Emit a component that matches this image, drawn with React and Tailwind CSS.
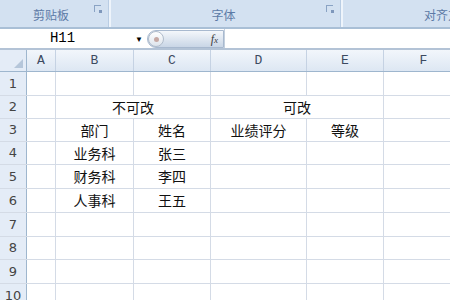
import React from "react";

const cols = [
  { key: "A", w: "w-[29px]" },
  { key: "B", w: "w-[78px]" },
  { key: "C", w: "w-[77px]" },
  { key: "D", w: "w-[96px]" },
  { key: "E", w: "w-[77px]" },
  { key: "F", w: "w-[80px]" },
];

const rowH = ["h-[24px]", "h-[23px]", "h-[23px]", "h-[23px]", "h-[24px]", "h-[24px]", "h-[24px]", "h-[23px]", "h-[24px]", "h-[24px]"];

// cell contents by row number; merged cells use span widths
const rows = {
  2: [
    { w: "w-[29px]" },
    { w: "w-[155px]", text: "不可改" },
    { w: "w-[173px]", text: "可改" },
    { w: "w-[80px]" },
  ],
  3: [null, "部门", "姓名", "业绩评分", "等级", null],
  4: [null, "业务科", "张三", null, null, null],
  5: [null, "财务科", "李四", null, null, null],
  6: [null, "人事科", "王五", null, null, null],
};

const cjk = { fontFamily: '"Noto Sans CJK SC", "Noto Sans", sans-serif' };
const mono = { fontFamily: '"Liberation Mono", "DejaVu Sans Mono", monospace' };

function Launcher() {
  return (
    <span className="inline-block w-[7px] h-[7px] border-l border-t border-[#8aa3c4] relative">
      <span className="absolute right-[-1px] bottom-[-1px] w-[3px] h-[3px] bg-[#7e97bb]" />
    </span>
  );
}

function Ribbon() {
  return (
    <div className="h-[29px] flex bg-[#dbe6f4] border-b-2 border-[#a9bfd6]">
      <div className="w-[108px] flex items-end pb-[3px] bg-[#d3e1f1]">
        <span className="flex-1 text-center text-[12px] text-[#5c7aa6] pl-[8px]" style={cjk}>剪贴板</span>
        <span className="pr-[7px] pb-[6px]"><Launcher /></span>
      </div>
      <div className="w-[3px] shrink-0 bg-[#eef4fb] border-l border-[#b9cde4]" />
      <div className="w-[229px] flex items-end pb-[3px] bg-[#d3e1f1]">
        <span className="flex-1 text-center text-[12px] text-[#5c7aa6] pl-[10px]" style={cjk}>字体</span>
        <span className="pr-[7px] pb-[6px]"><Launcher /></span>
      </div>
      <div className="w-[3px] shrink-0 bg-[#eef4fb] border-l border-[#b9cde4]" />
      <div className="flex-1 flex items-end justify-end pb-[3px] bg-[#d3e1f1] overflow-hidden">
        <span className="text-[12px] text-[#5c7aa6] whitespace-nowrap mr-[-22px]" style={cjk}>对齐方式</span>
      </div>
    </div>
  );
}

function FormulaBar() {
  return (
    <div className="h-[21px] flex bg-white border-b-2 border-[#b3c3d6]">
      <div className="w-[147px] shrink-0 flex items-center">
        <span className="flex-1 text-center text-[14px] text-black pr-[10px]" style={mono}>H11</span>
        <span className="text-[8px] text-black pr-[4px]">▼</span>
      </div>
      <div className="w-[77px] shrink-0 h-[18px] mt-[1px] flex items-center justify-between rounded-l-full border border-[#a8b9cf] bg-gradient-to-b from-[#f4f7fb] to-[#c9d6e6]">
        <span className="w-[16px] h-[16px] rounded-full border border-[#b0bccb] bg-gradient-to-b from-white to-[#dde4ec] flex items-center justify-center">
          <span className="w-[5px] h-[5px] rounded-full bg-[#c6a9a4]" />
        </span>
        <span className="italic text-[12px] text-[#3b3b3b] pr-[5px]" style={{ fontFamily: '"Liberation Serif", serif' }}>
          f<span className="text-[9px]">x</span>
        </span>
      </div>
      <div className="w-px bg-[#c4d0de]" />
      <div className="flex-1" />
    </div>
  );
}

function HeaderRow() {
  return (
    <div className="h-[22px] flex bg-gradient-to-b from-[#f2f6fb] to-[#dde7f3] border-b border-[#9eb6ce]">
      <div className="w-[27px] shrink-0 border-r border-[#9eb6ce] relative bg-[#e4ecf7]">
        <span className="absolute right-[3px] bottom-[3px] w-0 h-0 border-l-[9px] border-l-transparent border-b-[9px] border-b-[#b5c6da]" />
      </div>
      {cols.map((c) => (
        <div key={c.key} className={`${c.w} shrink-0 border-r border-[#c5d2e3] flex items-center justify-center text-[13px] text-[#3c4a60]`} style={mono}>
          {c.key}
        </div>
      ))}
    </div>
  );
}

function Cell({ w, text }) {
  return (
    <div className={`${w} shrink-0 border-r border-[#d4dbe6] flex items-center justify-center text-[14px] text-[#111] whitespace-nowrap`} style={cjk}>
      {text}
    </div>
  );
}

function Row({ n, h }) {
  const def = rows[n];
  let cells;
  if (def && n === 2) {
    cells = def.map((c, i) => <Cell key={i} w={c.w} text={c.text} />);
  } else {
    cells = cols.map((c, i) => <Cell key={c.key} w={c.w} text={def ? def[i] : null} />);
  }
  return (
    <div className={`${h} flex border-b border-[#d4dbe6]`}>
      <div className="w-[27px] shrink-0 bg-[#e4ecf7] border-r border-[#9eb6ce] flex items-center justify-center text-[13px] text-[#444]" style={{ fontFamily: '"DejaVu Sans", sans-serif' }}>
        {n}
      </div>
      {cells}
    </div>
  );
}

export default function App() {
  return (
    <div className="w-[450px] h-[300px] overflow-hidden bg-white">
      <Ribbon />
      <FormulaBar />
      <HeaderRow />
      {rowH.map((h, i) => (
        <Row key={i} n={i + 1} h={h} />
      ))}
    </div>
  );
}
